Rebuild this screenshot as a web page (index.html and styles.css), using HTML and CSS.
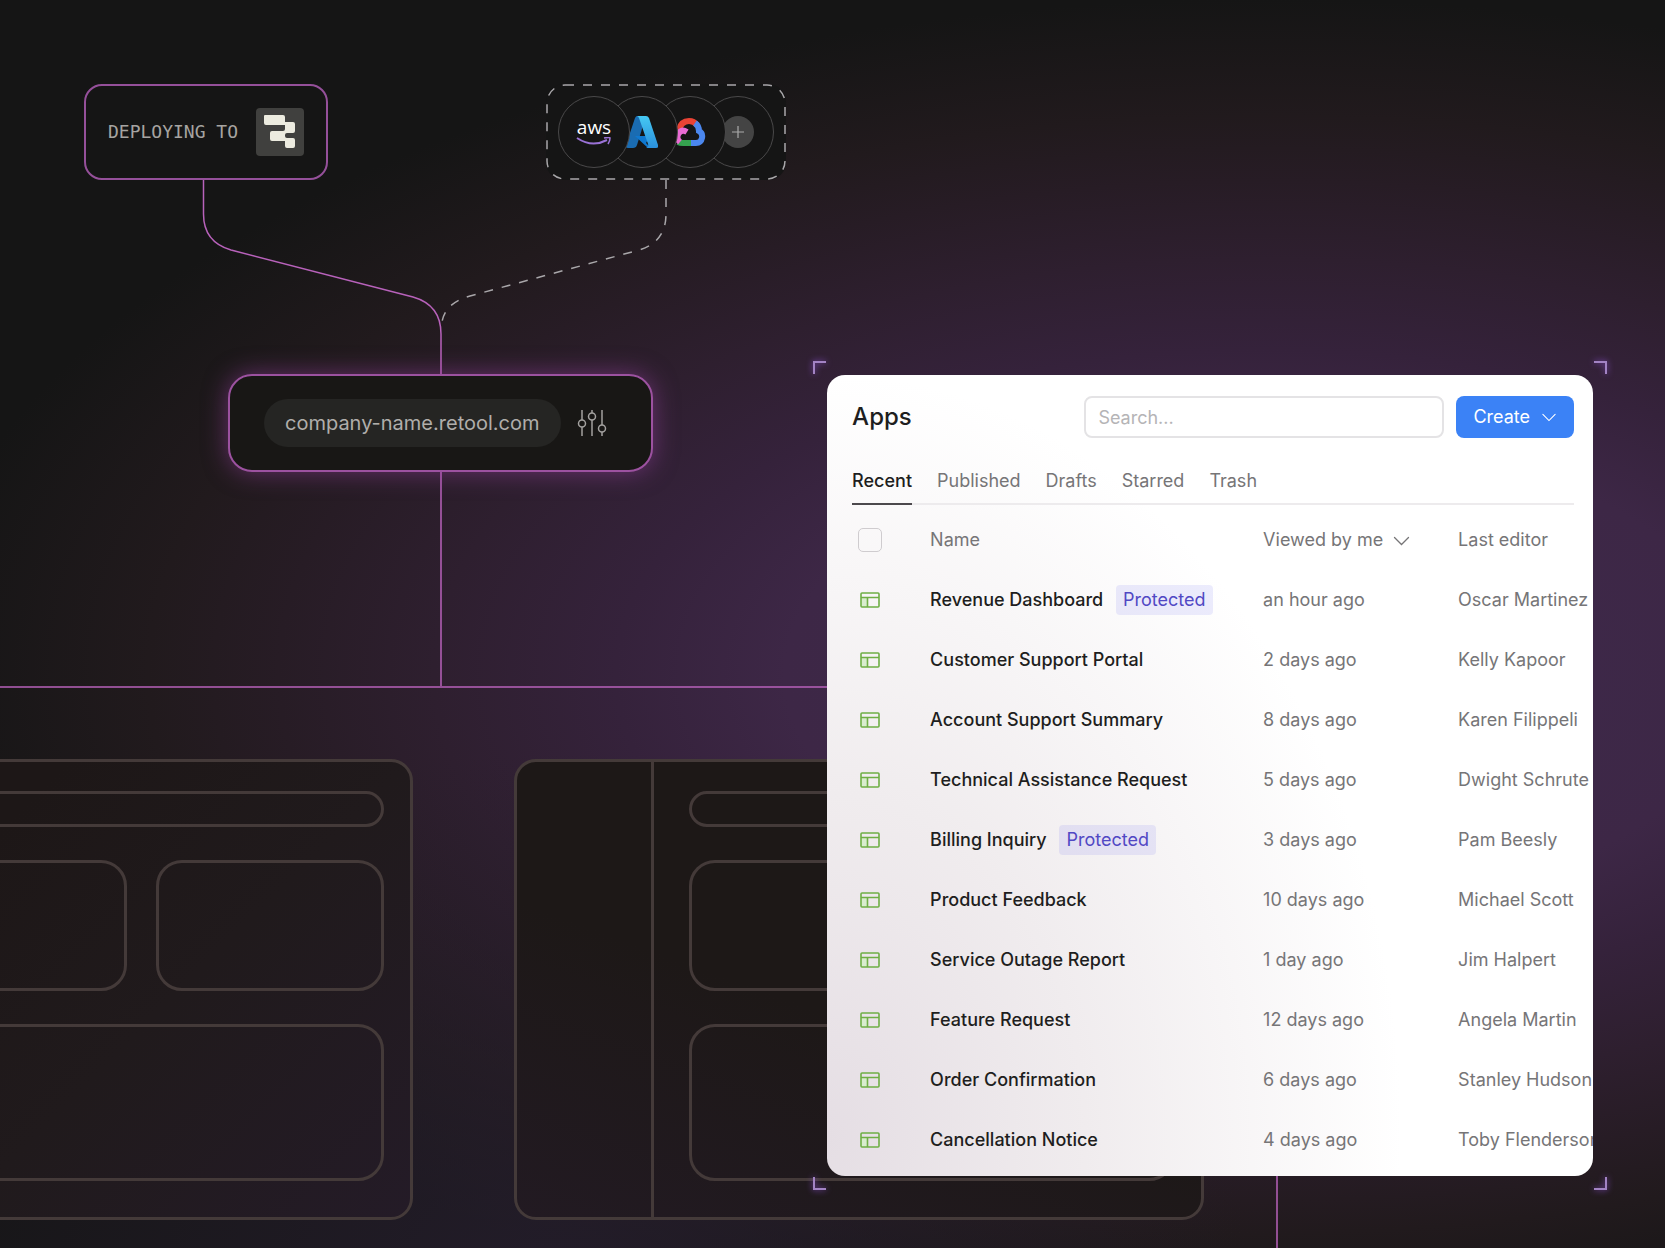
FILE: index.html
```html
<!DOCTYPE html>
<html lang="en">
<head>
    <meta charset="utf-8">
    <title>Apps</title>
    <link rel="stylesheet" href="styles.css">
</head>
<body>
    <!-- Shared icons -->
    <svg class="sprite" aria-hidden="true">
        <symbol id="icon-app" viewBox="0 0 20 16">
            <rect x="1" y="5" width="6" height="10" fill="#d9edcf"/>
            <rect x="1" y="1" width="18" height="14" rx="1" fill="none" stroke="#6fae45" stroke-width="1.6"/>
            <path d="M1 5.5H19M7.5 5.5V15" fill="none" stroke="#6fae45" stroke-width="1.6"/>
        </symbol>
        <symbol id="icon-chevron" viewBox="0 0 16 10">
            <path d="M1 1.5L8 8.5L15 1.5" fill="none" stroke="currentColor" stroke-width="1.3" stroke-linecap="round"/>
        </symbol>
    </svg>

    <main class="stage">
        <div class="canvas">
            <!-- Connector lines between the nodes -->
            <svg class="lines" aria-hidden="true">
                <path class="line-solid" d="M203.500 180V214Q203.500 242 231 250L413 297Q441 305 441 334V686"/>
                <path class="line-solid" d="M0 687H1277V3000"/>
                <path class="line-dashed" d="M666 180V214Q666 242 639 250L470 296Q445 303 442 322"/>
            </svg>

            <div class="mock mock-left">
                <div class="mock-side"></div>
                <div class="mock-body">
                    <div class="mock-bar"></div>
                    <div class="mock-card"></div>
                    <div class="mock-card"></div>
                    <div class="mock-chart"></div>
                </div>
            </div>
            <div class="mock mock-right">
                <div class="mock-side"></div>
                <div class="mock-body">
                    <div class="mock-bar"></div>
                    <div class="mock-card"></div>
                    <div class="mock-card"></div>
                    <div class="mock-chart"></div>
                </div>
            </div>

            <div class="node deploy">
                <span>DEPLOYING TO</span>
                <svg class="retool" viewBox="0 0 48 48" role="img" aria-label="Retool">
                    <rect width="48" height="48" rx="4" fill="#40403e"/>
                    <path fill="#ecebdf" d="M9 7H27Q29 7 29 9V14H37Q39 14 39 16V23Q39 25 37 25H31Q29 25 29 27V28Q29 30 31 30H37Q39 30 39 32V38Q39 40 37 40H31Q29 40 29 38V33H16Q14 33 14 31V25Q14 23 16 23H27Q29 23 29 21V17H10Q8 17 8 15V8Q8 7 9 7Z"/>
                </svg>
            </div>

            <div class="node clouds">
                <svg class="frame" aria-hidden="true"><rect class="line-dashed" x="1" y="1" width="238" height="94" rx="18"/></svg>
                <div class="cloud cloud-aws">
                    <span>aws</span>
                    <svg width="36" height="10" viewBox="0 0 36 10" aria-hidden="true">
                        <path d="M1 1Q16 11 31 3" fill="none" stroke="#9a72d6" stroke-width="2"/>
                        <path d="M28 1Q34 0 34 1Q34 4 32 7" fill="none" stroke="#9a72d6" stroke-width="1.6"/>
                    </svg>
                </div>
                <div class="cloud">
                    <svg width="32" height="32" viewBox="0 0 32 32" role="img" aria-label="Azure">
                        <defs>
                            <linearGradient id="azure-light" x2="0" y2="1">
                                <stop offset="0" stop-color="#45c8f3"/>
                                <stop offset="1" stop-color="#2b90dc"/>
                            </linearGradient>
                        </defs>
                        <path d="M11 0H20L11 29Q10 32 7 32H2Q-1 32 0 29L9 2Q10 0 11 0Z" fill="#1a6cb2"/>
                        <path d="M9 20H24L20 27L25 32H22Z" fill="#0f78d0"/>
                        <path d="M11 0H20Q22 0 23 2L32 29Q33 32 30 32H20Q23 31 22 28L13 2Q12 0 11 0Z" fill="url(#azure-light)"/>
                    </svg>
                </div>
                <div class="cloud">
                    <svg width="32" height="28" viewBox="0 0 32 28" role="img" aria-label="Google Cloud">
                        <g fill="none" stroke-width="6">
                            <path d="M5 12Q7 3 15 3Q20 3 23 7" stroke="#ea4335"/>
                            <path d="M21 5Q25 8 25 13Q29 15 28 20Q27 25 22 25H16" stroke="#4b87ee"/>
                            <path d="M17 25H9Q6 25 4 24" stroke="#35a24f"/>
                            <path d="M6 24Q1 20 5 15Q8 11 13 14" stroke="#ea6bd4"/>
                        </g>
                    </svg>
                </div>
                <div class="cloud">
                    <svg width="32" height="32" viewBox="0 0 32 32" role="img" aria-label="More">
                        <circle cx="16" cy="16" r="16" fill="#444"/>
                        <path d="M10 16H22M16 10V22" stroke="#aaa" stroke-width="1.2"/>
                    </svg>
                </div>
            </div>

            <div class="node address">
                <span class="url">company-name.retool.com</span>
                <svg width="30" height="28" viewBox="0 0 30 28" fill="none" stroke="#a3a19f" stroke-width="1.5" aria-hidden="true">
                    <path d="M5 1V11M5 18V27M15 1V4M15 11V27M25 1V16M25 23V27"/>
                    <circle cx="5" cy="14.500" r="3.500"/>
                    <circle cx="15" cy="7.500" r="3.500"/>
                    <circle cx="25" cy="19.500" r="3.500"/>
                </svg>
            </div>
        </div>

        <div class="frame-box">
            <i class="corner top left"></i>
            <i class="corner top right"></i>
            <i class="corner bottom left"></i>
            <i class="corner bottom right"></i>

            <section class="panel">
                <header class="panel-head">
                    <h1>Apps</h1>
                    <input type="text" class="search" placeholder="Search..." aria-label="Search">
                    <button class="create">Create <svg width="14" height="9"><use href="#icon-chevron"/></svg></button>
                </header>

                <nav class="tabs">
                    <a href="#" class="active">Recent</a>
                    <a href="#">Published</a>
                    <a href="#">Drafts</a>
                    <a href="#">Starred</a>
                    <a href="#">Trash</a>
                </nav>

                <table class="apps">
                    <thead>
                        <tr>
                            <th class="col-icon"><input type="checkbox" aria-label="Select all"></th>
                            <th class="col-name">Name</th>
                            <th class="col-viewed">Viewed by me <svg width="17" height="10"><use href="#icon-chevron"/></svg></th>
                            <th>Last editor</th>
                        </tr>
                    </thead>
                    <tbody>
                        <tr>
                            <td><svg class="app-icon"><use href="#icon-app"/></svg></td>
                            <td>Revenue Dashboard <span class="tag">Protected</span></td>
                            <td>an hour ago</td>
                            <td>Oscar Martinez</td>
                        </tr>
                        <tr>
                            <td><svg class="app-icon"><use href="#icon-app"/></svg></td>
                            <td>Customer Support Portal</td>
                            <td>2 days ago</td>
                            <td>Kelly Kapoor</td>
                        </tr>
                        <tr>
                            <td><svg class="app-icon"><use href="#icon-app"/></svg></td>
                            <td>Account Support Summary</td>
                            <td>8 days ago</td>
                            <td>Karen Filippeli</td>
                        </tr>
                        <tr>
                            <td><svg class="app-icon"><use href="#icon-app"/></svg></td>
                            <td>Technical Assistance Request</td>
                            <td>5 days ago</td>
                            <td>Dwight Schrute</td>
                        </tr>
                        <tr>
                            <td><svg class="app-icon"><use href="#icon-app"/></svg></td>
                            <td>Billing Inquiry <span class="tag">Protected</span></td>
                            <td>3 days ago</td>
                            <td>Pam Beesly</td>
                        </tr>
                        <tr>
                            <td><svg class="app-icon"><use href="#icon-app"/></svg></td>
                            <td>Product Feedback</td>
                            <td>10 days ago</td>
                            <td>Michael Scott</td>
                        </tr>
                        <tr>
                            <td><svg class="app-icon"><use href="#icon-app"/></svg></td>
                            <td>Service Outage Report</td>
                            <td>1 day ago</td>
                            <td>Jim Halpert</td>
                        </tr>
                        <tr>
                            <td><svg class="app-icon"><use href="#icon-app"/></svg></td>
                            <td>Feature Request</td>
                            <td>12 days ago</td>
                            <td>Angela Martin</td>
                        </tr>
                        <tr>
                            <td><svg class="app-icon"><use href="#icon-app"/></svg></td>
                            <td>Order Confirmation</td>
                            <td>6 days ago</td>
                            <td>Stanley Hudson</td>
                        </tr>
                        <tr>
                            <td><svg class="app-icon"><use href="#icon-app"/></svg></td>
                            <td>Cancellation Notice</td>
                            <td>4 days ago</td>
                            <td>Toby Flenderson</td>
                        </tr>
                    </tbody>
                </table>
            </section>
        </div>
    </main>
</body>
</html>
```
FILE: styles.css
```css
* { box-sizing: border-box; }

body {
    margin: 0;
    background: #151515;
    color: #1e1e20;
    font-family: Inter, sans-serif;
    font-size: 18px;
    line-height: 24px;
}

.sprite { position: absolute; width: 0; height: 0; }

/* Dark backdrop with the purple glow */
.stage {
    position: relative;
    overflow: hidden;
    min-height: 100vh;
    padding: 375px 72px 73px;
    background:
        radial-gradient(ellipse 42% 42% at 33% 102%, rgba(38, 30, 46, 0.8), rgba(46, 28, 42, 0)),
        radial-gradient(ellipse 78% 52% at 76% 54%, #3e2a4c 0%, #3d2746 37%, #35223b 50%, #2e1f2f 64%, #271c25 76%, #211a1d 86%, #151515 104%);
}

/* Diagram, drawn behind the panel */
.canvas { position: absolute; inset: 0; }
.lines { position: absolute; width: 100%; height: 100%; }
.line-solid { fill: none; stroke: #b862bb; stroke-width: 1.5; }
.line-dashed { fill: none; stroke: #a9a7aa; stroke-width: 1.5; stroke-dasharray: 9 9; }

.node {
    position: absolute;
    display: flex;
    align-items: center;
    background: #151515;
}

.deploy {
    left: 84px;
    top: 84px;
    height: 96px;
    padding: 0 22px;
    gap: 18px;
    border: 2px solid #95509a;
    border-radius: 18px;
    color: #a6a4a1;
    font-family: "DejaVu Sans Mono", monospace;
}
.retool { width: 48px; height: 48px; }

.clouds {
    left: 546px;
    top: 84px;
    width: 240px;
    height: 96px;
    padding: 0 12px;
    border-radius: 18px;
}
.frame { position: absolute; inset: 0; width: 100%; height: 100%; }
.cloud {
    position: relative;
    display: flex;
    flex: none;
    flex-direction: column;
    align-items: center;
    justify-content: center;
    width: 72px;
    height: 72px;
    margin-right: -24px;
    border: 1px solid #4a494a;
    border-radius: 50%;
    background: #151515;
}
.cloud:nth-of-type(1) { z-index: 4; }
.cloud:nth-of-type(2) { z-index: 3; }
.cloud:nth-of-type(3) { z-index: 2; }
.cloud-aws { color: #fff; font: 500 19px/20px "Open Sans", sans-serif; }

.address {
    left: 228px;
    top: 374px;
    width: 425px;
    height: 98px;
    padding: 0 34px;
    gap: 16px;
    border: 2px solid #9c52a0;
    border-radius: 24px;
    background: #181715;
    box-shadow: 0 0 24px rgba(168, 70, 180, 0.5);
    color: #b0aeab;
}
.url {
    padding: 12px 21px;
    border-radius: 24px;
    background: #252523;
    font-size: 20px;
}

/* Wireframe apps */
.mock {
    position: absolute;
    top: 759px;
    display: flex;
    width: 690px;
    height: 461px;
    border: 3px solid #443a39;
    border-radius: 22px;
}
.mock-left { left: -277px; background: linear-gradient(135deg, #1d1717 30%, #201a1c 60%, #241b27 100%); }
.mock-right { left: 514px; background: linear-gradient(200deg, #1d1817 55%, #221a22 100%); }
.mock-side { width: 137px; border-right: 3px solid #443a39; }
.mock-body {
    display: grid;
    flex: 1;
    grid-template-columns: 1fr 1fr;
    grid-template-rows: 36px 131px 157px;
    gap: 33px 29px;
    padding: 29px 26px 0 35px;
}
.mock-bar, .mock-card, .mock-chart { border: 3px solid #443a39; border-radius: 26px; }
.mock-bar, .mock-chart { grid-column: span 2; }
.mock-bar { border-radius: 18px; }

/* Apps panel */
.frame-box { position: relative; width: 46vw; margin-left: auto; }
.corner {
    position: absolute;
    width: 13px;
    height: 13px;
    border: 0 solid #a283c4;
    filter: drop-shadow(0 0 3px #8a4fd0);
}
.top { top: -14px; border-top-width: 2px; }
.bottom { bottom: -14px; border-bottom-width: 2px; }
.left { left: -14px; border-left-width: 2px; }
.right { right: -14px; border-right-width: 2px; }

.panel {
    overflow: hidden;
    padding: 21px 0 6px 25px;
    border-radius: 18px;
    background: radial-gradient(ellipse 75% 95% at 0% 95%, #e5dee4 0%, #f0ecee 45%, #fff 100%) #fff;
}
.panel-head { display: flex; align-items: center; gap: 12px; margin-right: 19px; }
h1 { flex: 1; margin: 0; font-size: 24px; font-weight: 500; line-height: 32px; }
.search, .create {
    height: 42px;
    border-radius: 8px;
    font: inherit;
}
.search {
    width: 360px;
    padding: 0 12px;
    border: 2px solid #e4e3e5;
    background: #fff;
}
.search::placeholder { color: #b5b4b6; }
.create {
    display: flex;
    align-items: center;
    gap: 12px;
    padding: 0 18px 0 17px;
    border: 0;
    background: #3b82f6;
    color: #fff;
}

.tabs {
    display: flex;
    gap: 25px;
    margin: 31px 19px 0 0;
    border-bottom: 2px solid #edebed;
}
.tabs a {
    margin-bottom: -2px;
    padding-bottom: 10px;
    color: #767577;
    text-decoration: none;
}
.tabs .active { border-bottom: 2px solid #4c494d; color: #1e1e20; font-weight: 500; }

.apps {
    width: 100%;
    margin-top: 5px;
    border-collapse: collapse;
    table-layout: fixed;
    text-align: left;
    white-space: nowrap;
}
.apps th, .apps td { height: 60px; padding: 0; color: #767577; font-weight: 400; }
.apps td:nth-child(2) { color: #1e1e20; font-weight: 500; }
.col-icon { width: 78px; }
.col-name { width: 333px; }
.col-viewed { width: 195px; }
.col-viewed svg { margin-left: 5px; }
.app-icon { display: block; width: 20px; height: 16px; margin-left: 8px; }
.apps input {
    appearance: none;
    display: block;
    width: 24px;
    height: 24px;
    margin: 0 0 0 6px;
    border: 1px solid #cfcccf;
    border-radius: 5px;
    background: transparent;
}
.tag {
    display: inline-block;
    margin-left: 8px;
    padding: 3px 7px;
    border-radius: 4px;
    background: rgba(99, 102, 241, 0.12);
    color: #5148c4;
    font-weight: 400;
}
```
